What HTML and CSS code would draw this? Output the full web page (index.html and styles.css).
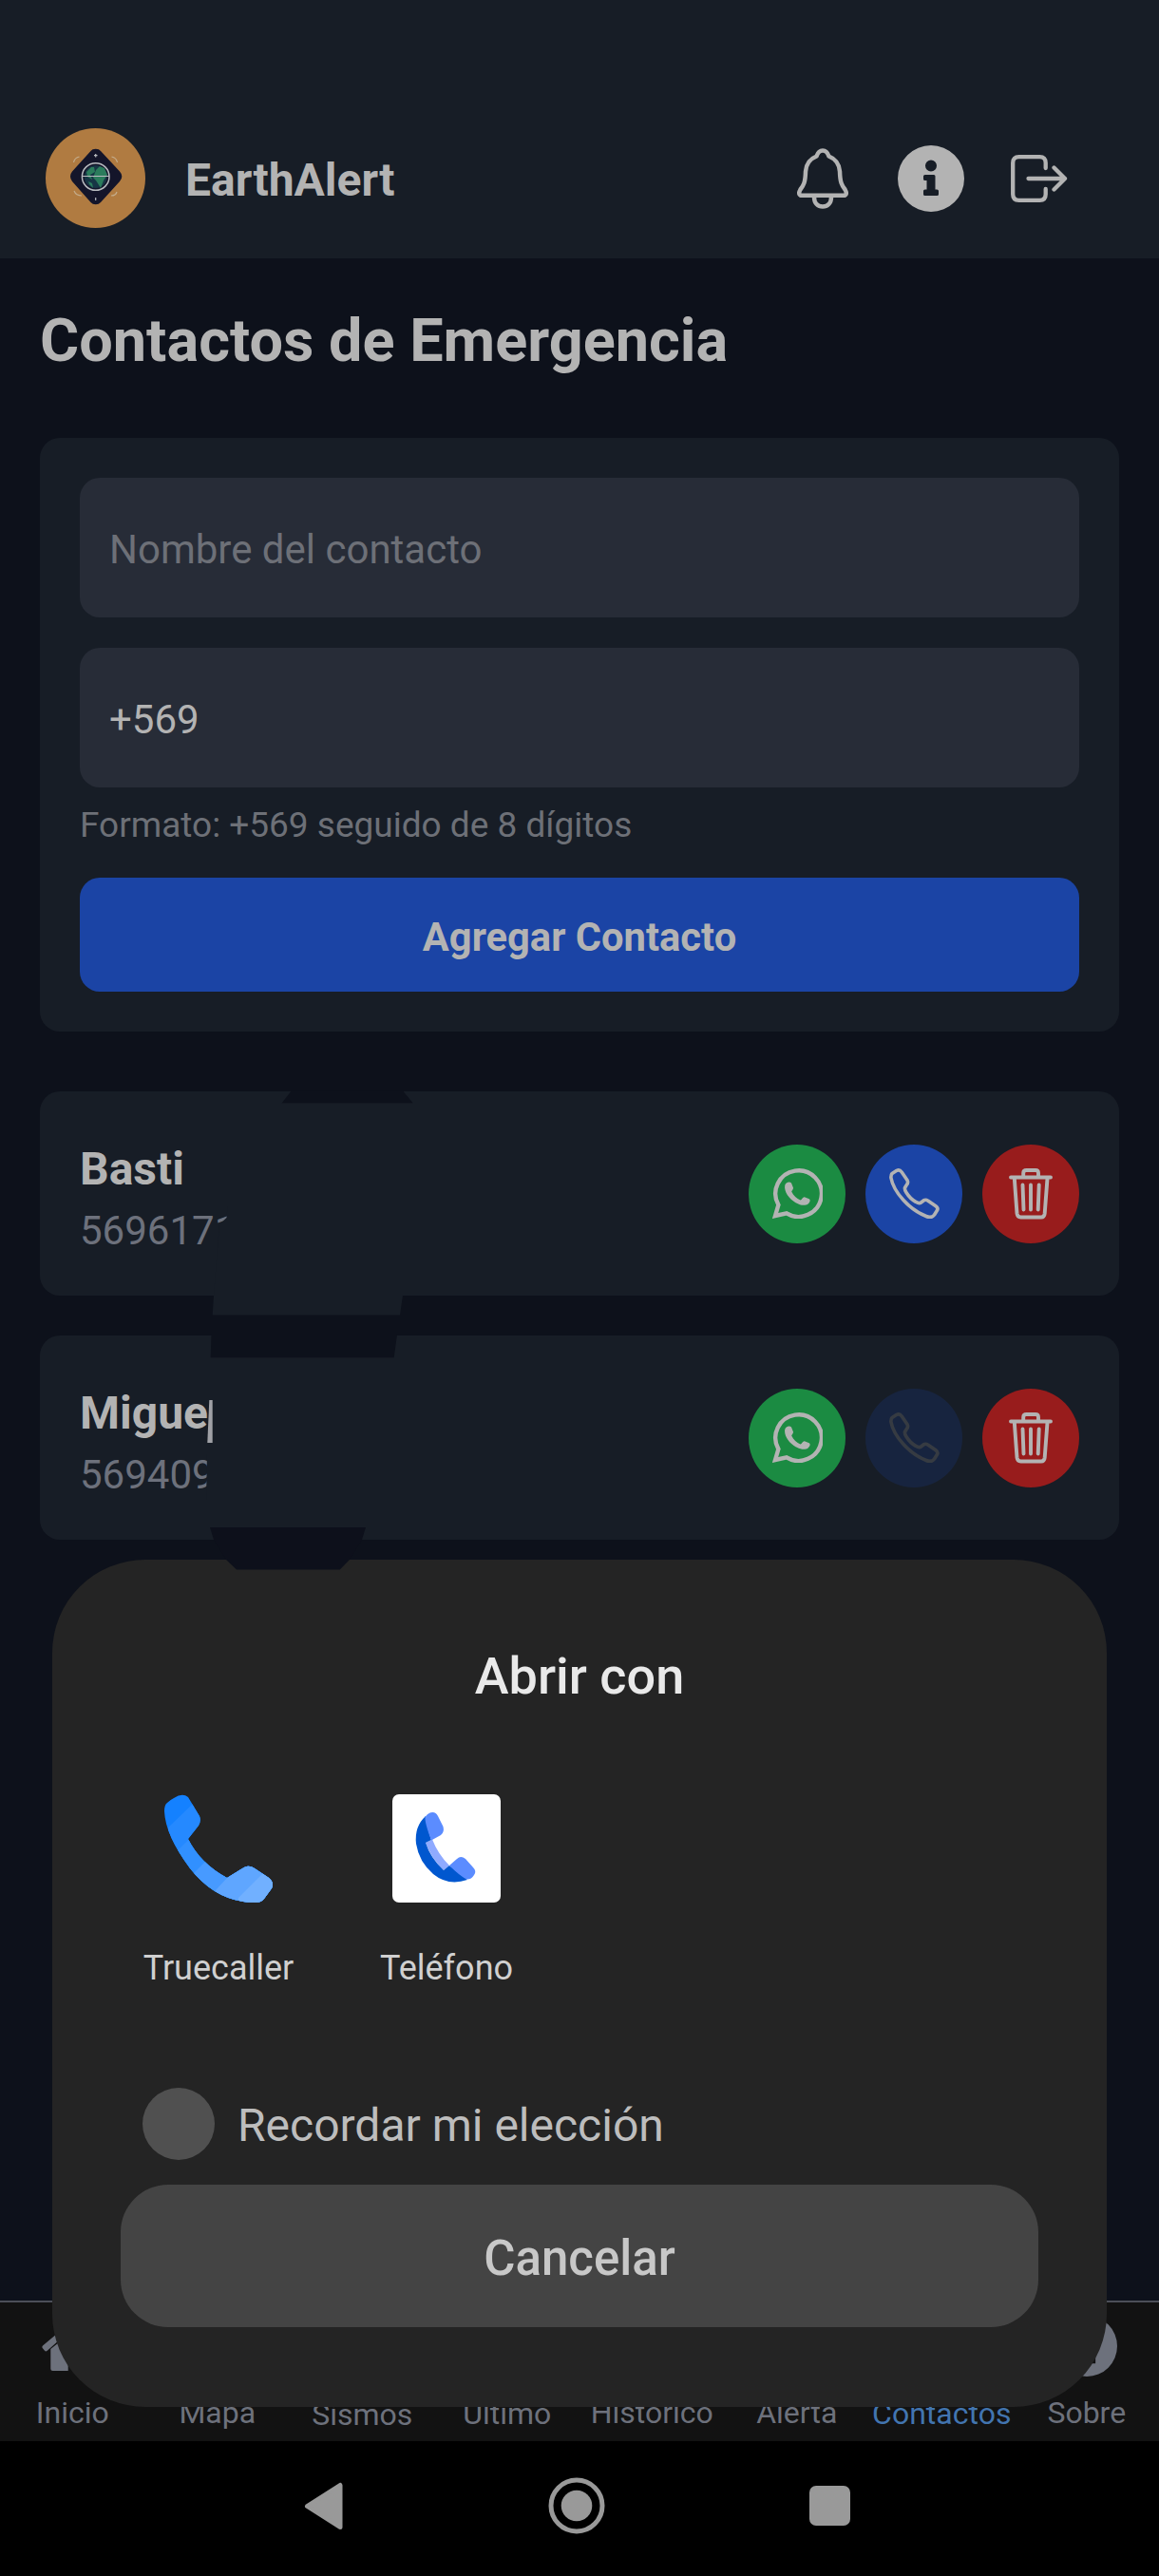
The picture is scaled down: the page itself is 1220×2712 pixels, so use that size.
FILE: index.html
```html
<!DOCTYPE html>
<html lang="es">
<head>
<meta charset="utf-8">
<title>EarthAlert</title>
<link rel="stylesheet" href="styles.css">
</head>
<body>
<svg width="0" height="0" class="defs" aria-hidden="true">
  <symbol id="wa" viewBox="0 0 53 53"><path fill="none" stroke="currentColor" stroke-width="4.4" d="M3 50 6.400 38.500A24.300 24.300 0 1 1 15 47.400Z"/><path fill="currentColor" d="M13.200 18c.6-3 4.800-4.500 6.800-2.500l2 5c.3 1.500-1.600 3-1.800 4 2 4 5.500 7.500 9.300 9 1.500-.4 2.500-3.500 4.300-3.300l5 2c1.800 1.200.5 4-1.200 5.200-3.500 2.500-8 1.600-13-1.200C18 32.500 12 24.500 13.200 18Z"/></symbol>
  <symbol id="call" viewBox="0 0 53 53"><path fill="none" stroke="currentColor" stroke-width="3.600" stroke-linejoin="round" d="M3 5.500 8 2.300Q11 1 13.200 4L19 12.500Q20.500 15.500 18 18L16.500 20.500Q16 22.500 18 25.500 22 32 28 35.300 31.500 37.500 33.500 36L36.500 33.700Q38.500 32.700 41 34.200L49 39.700Q52 42 50.300 44.500L47.500 49Q44.500 53 39 50.500 26 45.500 15 33.500 4 21.500 1.900 10 1.700 7 3 5.500Z"/></symbol>
  <symbol id="trash" viewBox="0 0 46 54"><path fill="none" stroke="currentColor" stroke-width="3.900" stroke-linecap="round" stroke-linejoin="round" d="M2 9.500H44M15.200 9V5Q15.200 2 18.500 2H28Q31 2 31 5V9M5.800 10.500 8.500 47.500Q9 51.500 12.500 51.500H34Q37.300 51.500 37.700 47.500L40.500 10.500M14.500 17.500 15.500 43.500M23 17.500V43.500M31.700 17.500 30.700 43.500"/></symbol>
</svg>
<div class="screen">
  <header class="topbar">
    <svg class="logo" viewBox="0 0 105 105"><circle cx="52.500" cy="52.500" r="52.500" fill="#b07b41"/><path d="M47.500 24Q49 21.700 52.700 21.700T58 24L78 45.500Q80.300 48 80.300 50.700T78 56L58 78Q56 80.300 52.700 80.300T47.500 78L28 56Q26 53.500 26 50.700T28 45.500Z" fill="#14152a"/><circle cx="52.700" cy="51" r="12" fill="#173545"/><path d="M43 46l5-5 3 0 1 5-5 3 2 5-5-3zM53 44l4-4 5 2 3 7-4 6-3 8-5-8-3-3zM45 56l4 2 1 5-4-4z" fill="#2b7c5c"/><circle cx="52.700" cy="51" r="14.300" fill="none" stroke="#b8bbc0" stroke-width="1.500"/><path d="M38.500 50.500H67M52.700 27v3.500M51 28.700h3.500M52.700 73v3" stroke="#b8bbc0" stroke-width="1.200"/><path d="M29.500 36q1-5 6-6M69.500 30q5 1 6 6M30 66q2 5 8 5M69 71q5 0 6-4" fill="none" stroke="#c4ac8b" stroke-width="1.200"/></svg>
    <div class="brand">EarthAlert</div>
    <svg class="bell" viewBox="0 0 54 64"><path fill="none" stroke="currentColor" stroke-width="4.500" stroke-linejoin="round" d="M27 2.500Q31.500 2.500 33.500 8.500C41 11.500 44.500 17 45 24.500C45.300 36 47 39 50.500 43.500Q53 48 50.500 49.700H3.500Q1 48 3.500 43.500C7 39 8.700 36 9 24.500C9.500 17 13 11.500 20.500 8.500Q22.500 2.500 27 2.500ZM18 51.500C18 58 22 61.500 27 61.500S36 58 36 51.500"/></svg>
    <svg class="info" viewBox="0 0 70 70"><path fill="currentColor" fill-rule="evenodd" d="M35 0a35 35 0 1 1 0 70a35 35 0 1 1 0-70ZM35 15.500a6 6 0 1 0 0 12a6 6 0 1 0 0-12ZM28.700 31Q27 31 27 32.500V35.500Q27 37 28.700 37H30.500V46.500H28.700Q27 46.500 27 48V51.500Q27 53 28.700 53H41.300Q43 53 43 51.500V48Q43 46.500 41.300 46.500H39.500V32.500Q39.500 31 38 31Z"/></svg>
    <svg class="exit" viewBox="0 0 60 50"><path fill="none" stroke="currentColor" stroke-width="4.300" stroke-linecap="round" stroke-linejoin="round" d="M36.700 14V8.500Q36.700 2.200 30.500 2.200H8.500Q2.200 2.200 2.200 8.500V41.500Q2.200 47.800 8.500 47.800H30.500Q36.700 47.800 36.700 41.500V36M18.500 25H57M45.500 13.500 57 25 45.500 36.500"/></svg>
  </header>

  <main class="content">
    <h1 class="title">Contactos de Emergencia</h1>
    <section class="form">
      <div class="field placeholder">Nombre del contacto</div>
      <div class="field">+569</div>
      <p class="hint">Formato: +569 seguido de 8 dígitos</p>
      <div class="submit">Agregar Contacto</div>
    </section>
    <section class="list">
      <article class="contact">
        <div class="person"><div class="name">Basti</div><div class="phone">5696171</div></div>
        <div class="btn green"><svg class="i53"><use href="#wa"/></svg></div>
        <div class="btn blue"><svg class="i53"><use href="#call"/></svg></div>
        <div class="btn red"><svg class="bin"><use href="#trash"/></svg></div>
      </article>
      <article class="contact">
        <div class="person"><div class="name">Migue</div><div class="phone">569409</div></div>
        <div class="btn green"><svg class="i53"><use href="#wa"/></svg></div>
        <div class="btn blue disabled"><svg class="i53"><use href="#call"/></svg></div>
        <div class="btn red"><svg class="bin"><use href="#trash"/></svg></div>
      </article>
    </section>
  </main>

  <nav class="tabs">
    <div class="tab"><svg class="tabicon" viewBox="0 0 64 64"><path fill="currentColor" d="M32 17 54.700 35V56Q54.700 58 52.500 58H37V42H27.700V58H11.500Q9.300 58 9.300 56V35ZM32 5.500 62 31Q64 33 62.500 35L60 37 32 13.500 5.500 37Q4 38 3 36.700L.5 33.700Q0 32.500 1 31.500Z"/></svg><span>Inicio</span></div>
    <div class="tab"><div class="tabicon"></div><span>Mapa</span></div>
    <div class="tab low2"><div class="tabicon"></div><span>Sismos</span></div>
    <div class="tab low1"><div class="tabicon"></div><span>Último</span></div>
    <div class="tab"><div class="tabicon"></div><span>Histórico</span></div>
    <div class="tab"><div class="tabicon"></div><span>Alerta</span></div>
    <div class="tab low1 active"><div class="tabicon"></div><span>Contactos</span></div>
    <div class="tab"><svg class="tabicon" viewBox="0 0 70 70"><path fill="currentColor" fill-rule="evenodd" d="M35 0a35 35 0 1 1 0 70a35 35 0 1 1 0-70ZM35 15.500a6 6 0 1 0 0 12a6 6 0 1 0 0-12ZM27 31V37H30.500V48H27V55H45V48H40V31Z"/></svg><span>Sobre</span></div>
  </nav>
  <div class="sysnav">
    <svg viewBox="0 0 1220 142" width="1220" height="142"><path fill="#999" stroke="#999" stroke-width="5" stroke-linejoin="round" d="M323.500 68.500 358 46.500V90.500Z"/><circle cx="607" cy="68" r="27" fill="none" stroke="#999" stroke-width="5"/><circle cx="607" cy="68" r="16.300" fill="#999"/><rect x="852" y="47" width="43" height="42" rx="7" fill="#999"/></svg>
  </div>

  <section class="dialog">
    <h2 class="dialog-title">Abrir con</h2>
    <div class="apps">
      <div class="app">
        <svg viewBox="0 0 114 114"><clipPath id="tc"><path d="M10 4Q19-2 25 3L37 23Q39 28 36 33L25 47Q38 73 66 88L84 77Q89 74 95 78L110 88Q116 93 113 99L105 110Q102 114 96 114 55 114 27 78 1 43 0 18 0 11 3 9 6 6 10 4Z"/></clipPath><g clip-path="url(#tc)"><path fill="#1481ff" d="M0 0H114V114H0Z"/><path fill="#2589ff" d="M4 35 30 10 114 0V114H0Z"/><path fill="#3190ff" d="M14 59 40 34 114 20V114H0Z"/><path fill="#479aff" d="M30 84 56 58 114 40V114H0Z"/><path fill="#5fa6ff" d="M54 101 92 60 114 60V114H54Z"/><path fill="#71b0ff" d="M78 109 103 84 114 78V114H78Z"/></g></svg>
        <span>Truecaller</span>
      </div>
      <div class="app">
        <svg viewBox="0 0 114 114"><rect width="114" height="114" rx="7" fill="#fff"/><path fill="#8faaff" d="M35 51 42 47.500Q48 63 60 75L54 80Q40 66 35 51Z"/><path fill="#0057cf" d="M35 23Q23 34 25 52 28 71 43 84 59 97 79 90L60 75 54 80Q40 67 35 51L41 48Q36 33 35 23Z"/><path fill="#5b8cff" d="M34.500 24Q38 19 42.500 19 46 19 48 23L53.500 34Q55 40 51 43L41 48.500Q34 30 34.500 24ZM60 75 68 68Q72 64 77 68L85 77Q89 81 86 85 83 90 78 89.500 70 85 60 75Z"/></svg>
        <span>Teléfono</span>
      </div>
    </div>
    <div class="remember"><i class="check"></i><span>Recordar mi elección</span></div>
    <div class="cancel">Cancelar</div>
  </section>

  <svg class="redaction" viewBox="210 1140 240 520" width="240" height="520">
    <path fill="#171d26" d="M239.500 1270 238.500 1282 231 1289 225 1364 223.700 1384.500H421L424 1364V1270Z"/>
    <path fill="#0d111b" d="M306.700 1148.500H424L434.700 1161.300H296.700ZM222.500 1405H418L414.700 1429.300H221.700Z"/>
    <path fill="#171d26" d="M218 1530H300V1580H217Z"/>
    <path fill="#a0a1a6" d="M220.300 1474H223.700V1519H218.300Z"/>
    <path fill="#0d101b" d="M221 1608H385L381 1621 368 1642 357.700 1652.500H249L238 1642 225 1621Z"/>
  </svg>
</div>
</body>
</html>
```
FILE: styles.css
```css
* { box-sizing: border-box; margin: 0; padding: 0; }
body { font-family: Roboto, "Liberation Sans", sans-serif; background: #0d111b; color: #b3b3b3; }
svg { display: block; flex: none; }
.defs { position: absolute; }
.screen { position: relative; display: flex; flex-direction: column; width: 1220px; height: 2712px; overflow: hidden; background: #0d111b; }

.topbar { display: flex; align-items: center; height: 272px; padding: 103px 96px 0 48px; background: #171d26; }
.logo { width: 105px; height: 105px; }
.brand { flex: 1; margin-left: 42px; padding-top: 5px; font-size: 48px; font-weight: 700; line-height: 56px; }
.bell { width: 54px; height: 64px; margin-right: 52px; }
.info { width: 70px; height: 70px; margin-right: 49px; }
.exit { width: 60px; height: 50px; }

.content { flex: 1; padding: 50px 42px 0; }
.title { font-size: 63px; font-weight: 700; line-height: 74px; white-space: nowrap; }
.form { margin-top: 65px; padding: 42px; border-radius: 21px; background: #171d26; }
.field { height: 147px; padding: 4px 31px 0; border-radius: 21px; background: #272c37; font-size: 42px; line-height: 143px; }
.field + .field { margin-top: 32px; }
.placeholder { color: #6d7077; }
.hint { margin-top: 18px; font-size: 37px; line-height: 44px; color: #6d7077; }
.submit { height: 120px; margin-top: 33px; padding-top: 5px; border-radius: 21px; background: #1b44a5; font-size: 41.7px; font-weight: 700; line-height: 115px; text-align: center; }

.list { display: flex; flex-direction: column; gap: 42px; margin-top: 63px; }
.contact { display: flex; align-items: center; gap: 21px; height: 215px; padding: 0 42px; border-radius: 21px; background: #171d26; }
.person { flex: 1; display: flex; flex-direction: column; gap: 12px; padding-top: 11px; }
.name { font-size: 48px; font-weight: 700; line-height: 56px; }
.phone { font-size: 42px; line-height: 50px; color: #6d717c; }
.btn { display: flex; align-items: center; justify-content: center; width: 102px; height: 104px; border-radius: 50%; }
.green { background: #1b8b42; }
.blue { background: #1b44a5; }
.red { background: #981c1c; }
.disabled { opacity: .2; }
.i53 { width: 53px; height: 53px; }
.bin { width: 46px; height: 54px; }

.tabs { display: flex; height: 148px; border-top: 2px solid #4c4f58; background: #121212; color: #6d717c; }
.tab { flex: 1 1 0; display: flex; flex-direction: column; align-items: center; padding-top: 14px; font-size: 32px; line-height: 38px; }
.tabicon { width: 64px; height: 64px; margin-bottom: 19px; }
.low1 { padding-top: 15px; }
.low2 { padding-top: 16px; }
.active { color: #4275b0; }
.sysnav { height: 142px; background: #000; }

.dialog { position: absolute; left: 55px; top: 1642px; width: 1110px; height: 892px; padding-top: 91px; border-radius: 98px; background: #242424; }
.dialog-title { font-size: 54px; font-weight: 500; line-height: 64px; text-align: center; color: #e9e9e9; }
.apps { display: flex; margin: 92px 55px 0; }
.app { display: flex; flex-direction: column; align-items: center; gap: 48px; width: 240px; font-size: 36px; line-height: 42px; color: #d0d0d0; }
.app svg { width: 114px; height: 114px; }
.remember { display: flex; align-items: center; height: 76px; margin: 105px 0 0 95px; font-size: 48px; color: #bdbdbd; }
.remember span { margin-left: 24px; padding-top: 2px; }
.check { width: 76px; height: 76px; border-radius: 50%; background: #505050; }
.cancel { height: 150px; margin: 26px 72px 0; padding-top: 6px; border-radius: 50px; background: #444; font-size: 51px; font-weight: 500; line-height: 144px; text-align: center; color: #c8c8c8; }

.redaction { position: absolute; left: 210px; top: 1140px; }
```
